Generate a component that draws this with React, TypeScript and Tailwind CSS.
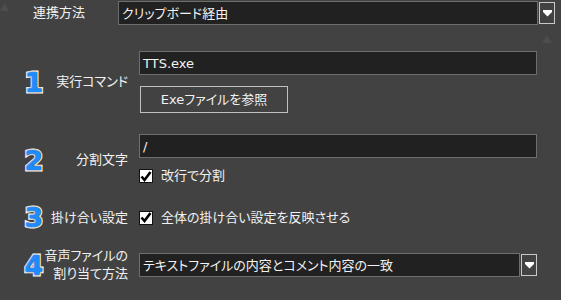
import React from 'react';

function Num({ n }: { n: string }) {
  return (
    <div className="w-[24px] flex justify-center">
      <span className="font-['DejaVu_Sans',sans-serif] font-bold text-[27px] leading-none text-[#1e8cff] [-webkit-text-stroke:3px_#ffffff] [paint-order:stroke_fill] [text-shadow:0_0_2px_#2a2a2a]">
        {n}
      </span>
    </div>
  );
}

function Label({ children }: { children: React.ReactNode }) {
  return (
    <div className="w-[82px] mr-[11px] flex flex-col items-end text-[13px] leading-[18px] text-[#f2f2f2] whitespace-nowrap">
      {children}
    </div>
  );
}

function Arrow() {
  return (
    <svg width="9" height="7" viewBox="0 0 9 7">
      <polygon points="0,0 9,0 9,2 4.5,6.5 0,2" fill="#ffffff" />
    </svg>
  );
}

function DropBtn() {
  return (
    <div className="w-[16px] h-[22px] border border-[#c8c8c8] flex items-center justify-center">
      <Arrow />
    </div>
  );
}

function Check({ label }: { label: string }) {
  return (
    <div className="flex items-center h-[20px]">
      <div className="w-[14px] h-[14px] bg-white border border-[#111] flex items-center justify-center">
        <svg width="12" height="11" viewBox="0 0 12 11">
          <path d="M1.5 5.5 L4.5 9 L10.5 1" stroke="#000" strokeWidth="2.6" fill="none" />
        </svg>
      </div>
      <span className="ml-[8px] text-[13px] leading-[18px] text-[#f2f2f2] whitespace-nowrap">{label}</span>
    </div>
  );
}

function Field({ text, w }: { text: string; w: string }) {
  return (
    <div className={`${w} h-[24px] bg-[#212121] border border-[#6e6e6e] flex items-center px-[3px] text-[13px] text-[#f2f2f2] leading-none whitespace-nowrap`}>
      {text}
    </div>
  );
}

export default function App() {
  return (
    <div className="relative w-[561px] h-[300px] overflow-hidden bg-[#424242] font-['DejaVu_Sans','Noto_Sans_CJK_JP',sans-serif] [font-feature-settings:'palt']">
      <svg className="absolute left-0 top-[3px]" width="9" height="8" viewBox="0 0 9 8">
        <polygon points="4.5,0 9,8 0,8" fill="#4d4d4d" />
      </svg>
      <svg className="absolute left-[542px] top-[35px]" width="10" height="8" viewBox="0 0 10 8">
        <polygon points="5,0 10,8 0,8" fill="#4d4d4d" />
      </svg>

      <div className="flex items-center pt-[1px] pl-[33px]">
        <div className="w-[85px] text-[13px] leading-[18px] text-[#f2f2f2] whitespace-nowrap">連携方法</div>
        <Field text="クリップボード経由" w="w-[420px]" />
        <div className="ml-[1px]">
          <DropBtn />
        </div>
      </div>

      <div className="pl-[22px] pt-[26px] flex flex-col">
        <div className="flex items-center">
          <Num n="1" />
          <Label>実行コマンド</Label>
          <div className="flex flex-col">
            <Field text="TTS.exe" w="w-[398px]" />
            <div className="mt-[11px] ml-[1px] w-[148px] h-[27px] border border-[#c0c0c0] flex items-center justify-center text-[13px] text-[#f2f2f2] leading-none">
              Exeファイルを参照
            </div>
          </div>
        </div>

        <div className="flex items-center mt-[21px]">
          <Num n="2" />
          <Label>分割文字</Label>
          <div className="flex flex-col">
            <Field text="/" w="w-[398px]" />
            <div className="mt-[8px]">
              <Check label="改行で分割" />
            </div>
          </div>
        </div>

        <div className="flex items-center mt-[18px]">
          <Num n="3" />
          <Label>掛け合い設定</Label>
          <Check label="全体の掛け合い設定を反映させる" />
        </div>

        <div className="flex items-center mt-[16px]">
          <Num n="4" />
          <Label>
            <span>音声ファイルの</span>
            <span>割り当て方法</span>
          </Label>
          <Field text="テキストファイルの内容とコメント内容の一致" w="w-[381px]" />
          <div className="ml-[1px]">
            <DropBtn />
          </div>
        </div>
      </div>
    </div>
  );
}
